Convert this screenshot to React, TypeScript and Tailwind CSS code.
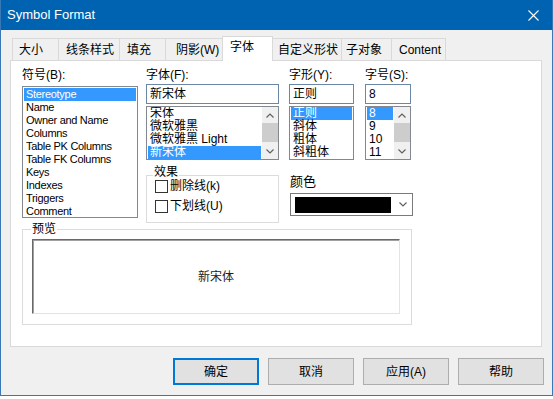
const ui = "font-['Liberation_Sans','Noto_Sans_CJK_SC',sans-serif]";

const tabs = [
  { t: '大小', cls: 'w-[47px] pl-[6px]' },
  { t: '线条样式', cls: 'w-[62px] pl-[7px]' },
  { t: '填充', cls: 'w-[47px] pl-[7px]' },
  { t: '阴影(W)', cls: 'w-[58px] pl-[10px]' },
  { t: '字体', cls: 'w-[51px] pl-[7px]', sel: true },
  { t: '自定义形状', cls: 'w-[70px] pl-[5px]' },
  { t: '子对象', cls: 'w-[51px] pl-[4px]' },
  { t: 'Content', cls: 'w-[55px] pl-[7px]' },
];

const symbols = ['Stereotype', 'Name', 'Owner and Name', 'Columns', 'Table PK Columns', 'Table FK Columns', 'Keys', 'Indexes', 'Triggers', 'Comment'];

function Chev({ up }: { up?: boolean }) {
  return (
    <svg width="8" height="5" viewBox="0 0 8 5">
      <polyline points={up ? '0.5,4.5 4,1 7.5,4.5' : '0.5,0.5 4,4 7.5,0.5'} fill="none" stroke="#606060" strokeWidth="1.2" />
    </svg>
  );
}

function Scroll() {
  return (
    <div className="w-[16px] flex flex-col bg-[#f0f0f0]">
      <div className="h-[16px] flex items-center justify-center"><Chev up /></div>
      <div className="h-[19px] bg-[#cdcdcd]" />
      <div className="flex-1" />
      <div className="h-[16px] flex items-center justify-center"><Chev /></div>
    </div>
  );
}

function Rows({ items, sel, text }: { items: string[]; sel: number; text: string }) {
  return (
    <div className="flex-1 px-[1px] overflow-hidden">
      {items.map((s, i) => (
        <div key={s} className={`h-[13px] leading-[13px] pl-[2px] whitespace-nowrap ${text} ${i === sel ? 'bg-[#3399ff] text-white' : 'text-black'}`}>{s}</div>
      ))}
    </div>
  );
}

function Label({ children }: { children: React.ReactNode }) {
  return <div className="h-[14px] leading-[14px] text-[12px] text-black">{children}</div>;
}

function Input({ value }: { value: string }) {
  return (
    <div className="mt-[2px] h-[20px] border border-[#6b87a8] bg-white flex items-center pl-[3px] text-[12px] text-black">{value}</div>
  );
}

function Check({ label }: { label: string }) {
  return (
    <div className="h-[14px] flex items-center ml-[8px]">
      <div className="w-[13px] h-[13px] border border-[#333333] bg-white" />
      <span className="ml-[2px] text-[12px] leading-[14px] text-black">{label}</span>
    </div>
  );
}

export default function App() {
  return (
    <div className={`w-[553px] h-[399px] bg-white ${ui}`}>
      <div className="w-[553px] h-[396px] border-x border-b border-[#3a78b5] bg-[#f0f0f0] flex flex-col">
        <div className="h-[30px] bg-[#0063b1] flex items-center pl-[6px] pr-[13px] shrink-0">
          <span className="text-white text-[13px]">Symbol Format</span>
          <svg className="ml-auto" width="11" height="11" viewBox="0 0 11 11">
            <path d="M0.5 0.5 L10.5 10.5 M10.5 0.5 L0.5 10.5" stroke="#ffffff" strokeWidth="1.1" />
          </svg>
        </div>

        <div className="flex items-end h-[24px] mt-[6px] ml-[11px]">
          {tabs.map((t, i) =>
            t.sel ? (
              <div key={t.t} className={`${t.cls} h-[25px] -mb-[1px] -ml-[1px] relative z-10 bg-white border border-b-0 border-[#d9d9d9] pt-[3px] text-[12px] leading-[14px] text-black`}>{t.t}</div>
            ) : (
              <div key={t.t} className={`${t.cls} h-[22px] ${i ? '-ml-[1px]' : ''} border border-b-0 border-[#d9d9d9] bg-[#f0f0f0] pt-[4px] text-[12px] leading-[14px] text-black`}>{t.t}</div>
            )
          )}
        </div>

        <div className="ml-[9px] w-[532px] h-[287px] border border-[#d9d9d9] bg-white pl-[11px] pt-[7px]">
          <div className="flex items-start">
            <div className="w-[116px]">
              <Label>符号(B):</Label>
              <div className="mt-[4px] h-[132px] border border-[#828790] bg-white pt-[1px] flex">
                <Rows items={symbols} sel={0} text="text-[11px] tracking-[-0.3px]" />
              </div>
            </div>

            <div className="ml-[8px] w-[133px]">
              <Label>字体(F):</Label>
              <Input value="新宋体" />
              <div className="mt-[2px] h-[54px] border border-[#828790] bg-white flex">
                <Rows items={['宋体', '微软雅黑', '微软雅黑 Light', '新宋体']} sel={3} text="text-[12px]" />
                <Scroll />
              </div>
              <div className="mt-[15px] h-[48px] border border-[#dcdcdc]">
                <div className="w-fit ml-[6px] -mt-[11px] bg-white px-[1px] text-[12px] leading-[14px] text-black">效果</div>
                <Check label="删除线(k)" />
                <div className="h-[6px]" />
                <Check label="下划线(U)" />
              </div>
            </div>

            <div className="ml-[10px]">
              <div className="flex">
                <div className="w-[65px]">
                  <Label>字形(Y):</Label>
                  <Input value="正则" />
                  <div className="mt-[2px] h-[54px] border border-[#828790] bg-white flex">
                    <Rows items={['正则', '斜体', '粗体', '斜粗体']} sel={0} text="text-[12px]" />
                  </div>
                </div>
                <div className="ml-[11px] w-[46px]">
                  <Label>字号(S):</Label>
                  <Input value="8" />
                  <div className="mt-[2px] h-[54px] border border-[#828790] bg-white flex">
                    <Rows items={['8', '9', '10', '11']} sel={0} text="text-[12px]" />
                    <Scroll />
                  </div>
                </div>
              </div>
              <div className="mt-[15px] h-[14px] leading-[14px] text-[13px] text-black pl-[1px]">颜色</div>
              <div className="mt-[4px] ml-[1px] w-[123px] h-[23px] border border-[#7a7a7a] bg-white flex items-center">
                <div className="ml-[4px] w-[96px] h-[16px] bg-black" />
                <div className="ml-auto mr-[5px]"><Chev /></div>
              </div>
            </div>
          </div>

          <div className="mt-[6px] w-[390px] h-[96px] border border-[#dcdcdc]">
            <div className="w-fit ml-[8px] -mt-[8px] bg-white px-[1px] text-[12px] leading-[14px] text-black">预览</div>
            <div className="mt-[3px] ml-[9px] w-[368px] h-[75px] border-t border-l border-[#696969] border-b border-r border-b-[#e3e3e3] border-r-[#e3e3e3] shadow-[inset_1px_1px_0_#a0a0a0] bg-white flex items-center justify-center text-[12px] text-[#222222]">
              新宋体
            </div>
          </div>
        </div>

        <div className="flex justify-end gap-[9px] mt-[11px] pr-[8px]">
          <button className="w-[86px] h-[27px] border-2 border-[#0078d7] bg-[#e1e1e1] text-[12px] text-black">确定</button>
          <button className="w-[86px] h-[27px] border border-[#adadad] bg-[#e1e1e1] text-[12px] text-black">取消</button>
          <button className="w-[86px] h-[27px] border border-[#adadad] bg-[#e1e1e1] text-[12px] text-black">应用(A)</button>
          <button className="w-[86px] h-[27px] border border-[#adadad] bg-[#e1e1e1] text-[12px] text-black">帮助</button>
        </div>
      </div>
    </div>
  );
}
